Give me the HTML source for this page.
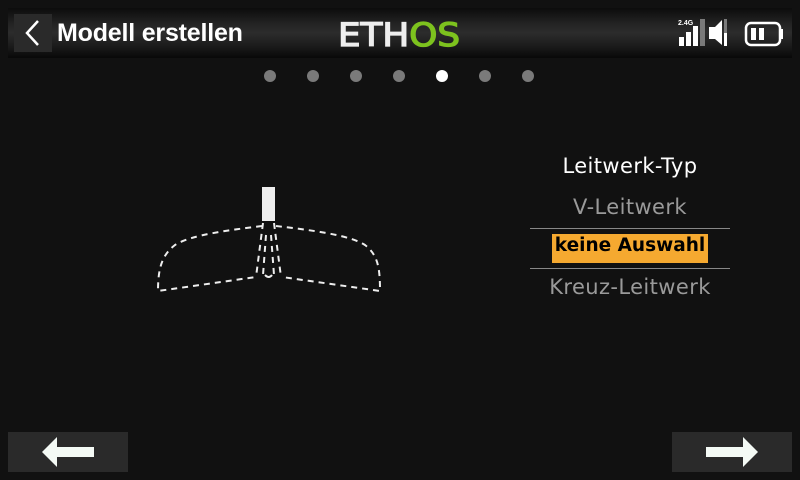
<!DOCTYPE html>
<html><head><meta charset="utf-8"><style>
*{margin:0;padding:0;box-sizing:border-box}
body{width:800px;height:480px;background:#111;position:relative;overflow:hidden;font-family:"Liberation Sans","DejaVu Sans",sans-serif}
.hdr{position:absolute;left:8px;top:8px;width:784px;height:50px;background:linear-gradient(#0c0c0c 0%,#222 30%,#2c2c2c 50%,#1c1c1c 75%,#080808 100%)}
.back{position:absolute;left:14px;top:14px;width:38px;height:38px;background:#2a2a2a}
.title{position:absolute;left:57px;top:19px;color:#fff;font-weight:bold;font-size:25px;letter-spacing:-0.2px}
.dot{position:absolute;top:70px;width:12px;height:12px;border-radius:50%;background:#7a7a7a}
.opt{position:absolute;left:480px;width:300px;text-align:center;font-family:"DejaVu Sans",sans-serif;font-size:21px;letter-spacing:0.4px}
.line{position:absolute;left:530px;width:200px;height:1px;background:#888}
.btn{position:absolute;top:432px;width:120px;height:40px;background:#2a2a2a}
</style></head><body>
<div class="hdr"></div>
<div class="back"><svg width="38" height="38"><polyline points="24,7 13,19 24,31" fill="none" stroke="#fff" stroke-width="2.5"/></svg></div>
<div class="title">Modell erstellen</div>
<svg style="position:absolute;left:336px;top:18px" width="130" height="32"><text x="2" y="28" font-family="DejaVu Sans" font-size="32" stroke-width="1.3" textLength="122" lengthAdjust="spacingAndGlyphs"><tspan fill="#eee" stroke="#eee">ETH</tspan><tspan fill="#7dc21e" stroke="#7dc21e">OS</tspan></text></svg>
<svg style="position:absolute;left:676px;top:14px" width="110" height="36">
<text x="2" y="11" font-size="7" font-weight="bold" fill="#fff" font-family="Liberation Sans">2.4G</text>
<rect x="3" y="23" width="5" height="9" fill="#fff"/><rect x="10" y="18" width="5" height="14" fill="#fff"/><rect x="17" y="12" width="5" height="20" fill="#fff"/><rect x="24" y="5" width="5" height="27" fill="#7a7a7a"/>
<polygon points="33,13 39,13 46,6 46,31 39,25 33,25" fill="#fff"/><rect x="48" y="19" width="3" height="13" fill="#fff"/><rect x="48" y="5" width="3" height="14" fill="#7a7a7a"/>
<rect x="70" y="9" width="34" height="22" rx="5" fill="none" stroke="#fff" stroke-width="2.5"/><rect x="104" y="15" width="3" height="10" fill="#fff"/><rect x="75" y="14" width="5" height="12" fill="#fff"/><rect x="83" y="14" width="5" height="12" fill="#fff"/>
</svg>
<div class="dot" style="left:264px"></div><div class="dot" style="left:307px"></div><div class="dot" style="left:350px"></div><div class="dot" style="left:393px"></div><div class="dot" style="left:436px;background:#fff"></div><div class="dot" style="left:479px"></div><div class="dot" style="left:522px"></div>
<svg style="position:absolute;left:150px;top:180px" width="240" height="120">
<rect x="112" y="7" width="13" height="34" fill="#eee"/>
<g fill="none" stroke="#eee" stroke-width="2" stroke-dasharray="6,5">
<path d="M112,46 C80,50 40,55 25,65 C12,75 8,88 8,111 L106,97"/>
<path d="M126,46 C160,50 200,55 215,65 C228,75 230,88 230,111 L132,97"/>
<path d="M113,43 L106,97"/><path d="M124,43 L131,97"/>
<path d="M116,55 L113,95"/><path d="M121,55 L124,95"/>
</g><path d="M115,95 Q119,99 122,95" stroke="#eee" stroke-width="2" fill="none"/></svg>
<div class="opt" style="top:154px;color:#fff">Leitwerk-Typ</div>
<div class="opt" style="top:195px;color:#9a9a9a">V-Leitwerk</div>
<div class="line" style="top:228px"></div>
<div style="position:absolute;left:552px;top:234px;width:156px;height:29px;background:#f5a930"></div>
<div class="opt" style="top:235px;color:#000;font-weight:bold;font-size:18.5px;letter-spacing:0">keine Auswahl</div>
<div class="line" style="top:268px"></div>
<div class="opt" style="top:275px;color:#9a9a9a">Kreuz-Leitwerk</div>
<div class="btn" style="left:8px"><svg width="120" height="40"><polygon points="34,20 49,5 49,15 86,15 86,25 49,25 49,35" fill="#f4faf5"/></svg></div>
<div class="btn" style="left:672px"><svg width="120" height="40"><polygon points="86,20 71,5 71,15 34,15 34,25 71,25 71,35" fill="#f4faf5"/></svg></div>
</body></html>
